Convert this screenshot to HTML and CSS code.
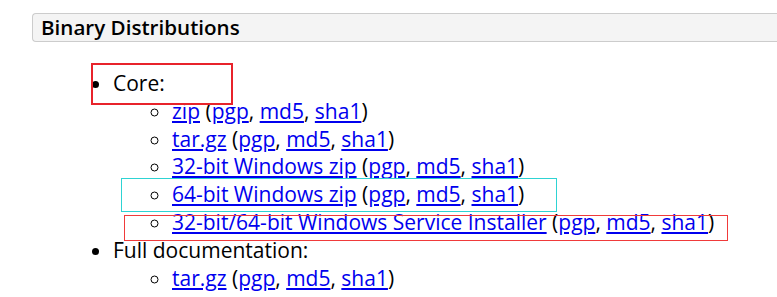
FILE: index.html
```html
<!DOCTYPE html>
<html lang="en">
<head>
  <meta charset="UTF-8">
  <meta name="viewport" content="width=device-width, initial-scale=1.0">
  <title>Binary Distributions</title>
  <link rel="stylesheet" href="styles.css">
</head>
<body>

  <div class="section">
    <h3 class="section-title">Binary Distributions</h3>

    <ul class="dist-list">
      <li>Core:
        <ul class="sub-list">
          <li><a href="#">zip</a> (<a href="#">pgp</a>, <a href="#">md5</a>, <a href="#">sha1</a>)</li>
          <li><a href="#">tar.gz</a> (<a href="#">pgp</a>, <a href="#">md5</a>, <a href="#">sha1</a>)</li>
          <li><a href="#">32-bit Windows zip</a> (<a href="#">pgp</a>, <a href="#">md5</a>, <a href="#">sha1</a>)</li>
          <li><a href="#">64-bit Windows zip</a> (<a href="#">pgp</a>, <a href="#">md5</a>, <a href="#">sha1</a>)</li>
          <li><a href="#">32-bit/64-bit Windows Service Installer</a> (<a href="#">pgp</a>, <a href="#">md5</a>, <a href="#">sha1</a>)</li>
        </ul>
      </li>
      <li>Full documentation:
        <ul class="sub-list">
          <li><a href="#">tar.gz</a> (<a href="#">pgp</a>, <a href="#">md5</a>, <a href="#">sha1</a>)</li>
        </ul>
      </li>
    </ul>
  </div>

  <!-- kotak anotasi di atas screenshot -->
  <div class="mark mark-core"></div>
  <div class="mark mark-win64"></div>
  <div class="mark mark-service"></div>

</body>
</html>
```

FILE: styles.css
```css
* {
  box-sizing: border-box;
  margin: 0;
  padding: 0;
}

html, body {
  overflow: hidden;
}

body {
  position: relative;
  font-family: 'Open Sans', sans-serif;
  font-size: 21px;
  color: #000;
  background: #fff;
  height: 100vh;
}

.section {
  padding-top: 13px;
  padding-left: 32px;
}

.section-title {
  background-color: #f4f4f4;
  border: 1px solid #cccccc;
  border-right: none;
  border-radius: 4px 0 0 4px;
  padding: 0 8px;
  font-size: 20.6px;
  font-weight: 600;
  line-height: 27px;
}

.dist-list {
  margin-top: 28px;
  padding-left: 81px;
  line-height: 27.8px;
  list-style: disc;
}

.sub-list {
  padding-left: 59px;
  list-style: circle;
}

a {
  color: #0000ee;
  text-decoration: underline;
}

.mark {
  position: absolute;
  pointer-events: none;
}

.mark-core {
  left: 91px;
  top: 63px;
  width: 142px;
  height: 42px;
  border: 2px solid #e8232b;
}

.mark-win64 {
  left: 121px;
  top: 178px;
  width: 436px;
  height: 34px;
  border: 1px solid #2ed3d3;
}

.mark-service {
  left: 124px;
  top: 215px;
  width: 604px;
  height: 26px;
  border: 1px solid #f03a3a;
}
```
